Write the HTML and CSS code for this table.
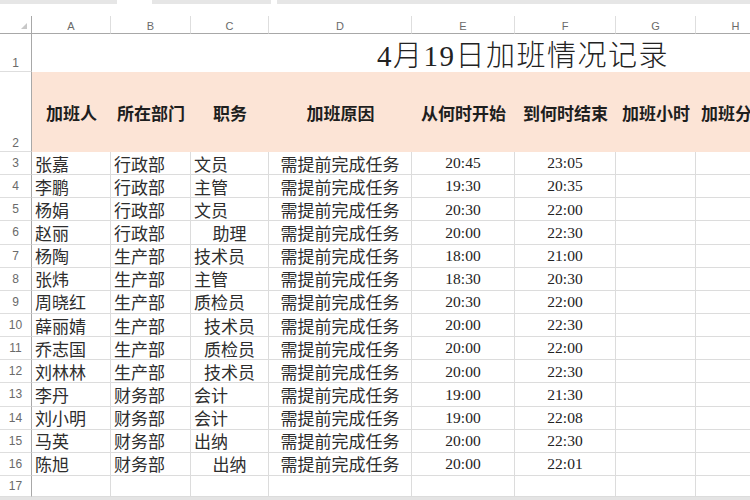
FILE: index.html
```html
<!DOCTYPE html>
<html lang="zh">
<head>
<meta charset="utf-8">
<title>4月19日加班情况记录</title>
<link rel="stylesheet" href="styles.css">
</head>
<body>
<div class="topbar">
  <div class="tab t1"></div>
  <div class="tab t2"></div>
  <div class="tab t3"></div>
</div>
<div class="sheet">
  <div class="corner"><span class="tri"></span></div>
  <div class="colh">A</div><div class="colh">B</div><div class="colh">C</div><div class="colh">D</div>
  <div class="colh">E</div><div class="colh">F</div><div class="colh">G</div><div class="colh">H</div>

  <div class="rowh bottom">1</div>
  <div class="title">4月19日加班情况记录</div>

  <div class="rowh bottom">2</div>
  <div class="head">加班人</div><div class="head">所在部门</div><div class="head">职务</div><div class="head">加班原因</div>
  <div class="head">从何时开始</div><div class="head">到何时结束</div><div class="head">加班小时</div><div class="head left">加班分钟</div>

  <div class="rowh">3</div><div class="c l">张嘉</div><div class="c l">行政部</div><div class="c l">文员</div><div class="c">需提前完成任务</div><div class="c n">20:45</div><div class="c n">23:05</div><div class="c"></div><div class="c"></div>
  <div class="rowh">4</div><div class="c l">李鹏</div><div class="c l">行政部</div><div class="c l">主管</div><div class="c">需提前完成任务</div><div class="c n">19:30</div><div class="c n">20:35</div><div class="c"></div><div class="c"></div>
  <div class="rowh">5</div><div class="c l">杨娟</div><div class="c l">行政部</div><div class="c l">文员</div><div class="c">需提前完成任务</div><div class="c n">20:30</div><div class="c n">22:00</div><div class="c"></div><div class="c"></div>
  <div class="rowh">6</div><div class="c l">赵丽</div><div class="c l">行政部</div><div class="c">助理</div><div class="c">需提前完成任务</div><div class="c n">20:00</div><div class="c n">22:30</div><div class="c"></div><div class="c"></div>
  <div class="rowh">7</div><div class="c l">杨陶</div><div class="c l">生产部</div><div class="c l">技术员</div><div class="c">需提前完成任务</div><div class="c n">18:00</div><div class="c n">21:00</div><div class="c"></div><div class="c"></div>
  <div class="rowh">8</div><div class="c l">张炜</div><div class="c l">生产部</div><div class="c l">主管</div><div class="c">需提前完成任务</div><div class="c n">18:30</div><div class="c n">20:30</div><div class="c"></div><div class="c"></div>
  <div class="rowh">9</div><div class="c l">周晓红</div><div class="c l">生产部</div><div class="c l">质检员</div><div class="c">需提前完成任务</div><div class="c n">20:30</div><div class="c n">22:00</div><div class="c"></div><div class="c"></div>
  <div class="rowh">10</div><div class="c l">薛丽婧</div><div class="c l">生产部</div><div class="c">技术员</div><div class="c">需提前完成任务</div><div class="c n">20:00</div><div class="c n">22:30</div><div class="c"></div><div class="c"></div>
  <div class="rowh">11</div><div class="c l">乔志国</div><div class="c l">生产部</div><div class="c">质检员</div><div class="c">需提前完成任务</div><div class="c n">20:00</div><div class="c n">22:00</div><div class="c"></div><div class="c"></div>
  <div class="rowh">12</div><div class="c l">刘林林</div><div class="c l">生产部</div><div class="c">技术员</div><div class="c">需提前完成任务</div><div class="c n">20:00</div><div class="c n">22:30</div><div class="c"></div><div class="c"></div>
  <div class="rowh">13</div><div class="c l">李丹</div><div class="c l">财务部</div><div class="c l">会计</div><div class="c">需提前完成任务</div><div class="c n">19:00</div><div class="c n">21:30</div><div class="c"></div><div class="c"></div>
  <div class="rowh">14</div><div class="c l">刘小明</div><div class="c l">财务部</div><div class="c l">会计</div><div class="c">需提前完成任务</div><div class="c n">19:00</div><div class="c n">22:08</div><div class="c"></div><div class="c"></div>
  <div class="rowh">15</div><div class="c l">马英</div><div class="c l">财务部</div><div class="c l">出纳</div><div class="c">需提前完成任务</div><div class="c n">20:00</div><div class="c n">22:30</div><div class="c"></div><div class="c"></div>
  <div class="rowh">16</div><div class="c l">陈旭</div><div class="c l">财务部</div><div class="c">出纳</div><div class="c">需提前完成任务</div><div class="c n">20:00</div><div class="c n">22:01</div><div class="c"></div><div class="c"></div>
  <div class="rowh">17</div><div class="c"></div><div class="c"></div><div class="c"></div><div class="c"></div><div class="c"></div><div class="c"></div><div class="c"></div><div class="c"></div>
</div>
<div class="bottombar"></div>
</body>
</html>
```

FILE: styles.css
```css
html, body {
  margin: 0;
  padding: 0;
  background: #ffffff;
  overflow: hidden;
  width: 750px;
  height: 500px;
}

.topbar {
  height: 16px;
  display: flex;
  align-items: flex-start;
}
.tab {
  height: 4px;
  background: #e6e6e6;
}
.t1 { width: 117px; margin-right: 35px; }
.t2 { width: 119px; margin-right: 6px; }
.t3 { flex: 1; }

.sheet {
  display: grid;
  grid-template-columns: 32px 79px 80px 78px 143px 103px 101px 80px 80px;
  grid-template-rows: 18px 38px 80px repeat(14, 23.15px) 21px;
  width: 776px;
  font-family: "Noto Sans CJK SC", "Liberation Sans", sans-serif;
  color: #2a2a2a;
}

.sheet > div {
  box-sizing: border-box;
  overflow: hidden;
  white-space: nowrap;
}

.corner {
  border-right: 1px solid #a8a8a8;
  border-bottom: 1px solid #a8a8a8;
  position: relative;
}
.tri {
  position: absolute;
  right: 4px;
  bottom: 4px;
  width: 0;
  height: 0;
  border-left: 6px solid transparent;
  border-bottom: 6px solid #c8c8c8;
}

.colh {
  font-family: "Liberation Sans", sans-serif;
  font-size: 11px;
  color: #6a6a6a;
  display: flex;
  align-items: center;
  justify-content: center;
  padding-top: 3px;
  border-right: 1px solid #dedede;
  border-bottom: 1px solid #a8a8a8;
}

.rowh {
  font-family: "Liberation Sans", sans-serif;
  font-size: 12px;
  color: #6a6a6a;
  display: flex;
  align-items: center;
  justify-content: center;
  border-right: 1px solid #a8a8a8;
  border-bottom: 1px solid #dedede;
}
.rowh.bottom {
  align-items: flex-end;
  padding-bottom: 1px;
}

.title {
  grid-column: 2 / span 8;
  font-family: "Liberation Serif", "Noto Sans CJK SC", serif;
  font-size: 29px;
  font-weight: 300;
  color: #222;
  display: flex;
  align-items: center;
  padding-left: 345px;
  letter-spacing: 1.5px;
}

.head {
  background: #fce4d6;
  font-weight: 700;
  font-size: 17px;
  color: #1e1e1e;
  display: flex;
  align-items: center;
  justify-content: center;
}
.head.left {
  justify-content: flex-start;
  padding-left: 5px;
}

.c {
  font-size: 17px;
  color: #2e2e2e;
  display: flex;
  align-items: center;
  justify-content: center;
  border-right: 1px solid #dcdcdc;
  border-bottom: 1px solid #dcdcdc;
  line-height: 1;
}
.c.l {
  justify-content: flex-start;
  padding-left: 3px;
}
.c.n {
  font-family: "Liberation Serif", serif;
  font-size: 15.5px;
  color: #222;
}

.bottombar {
  height: 3px;
  background: #e4e4e4;
}
```
